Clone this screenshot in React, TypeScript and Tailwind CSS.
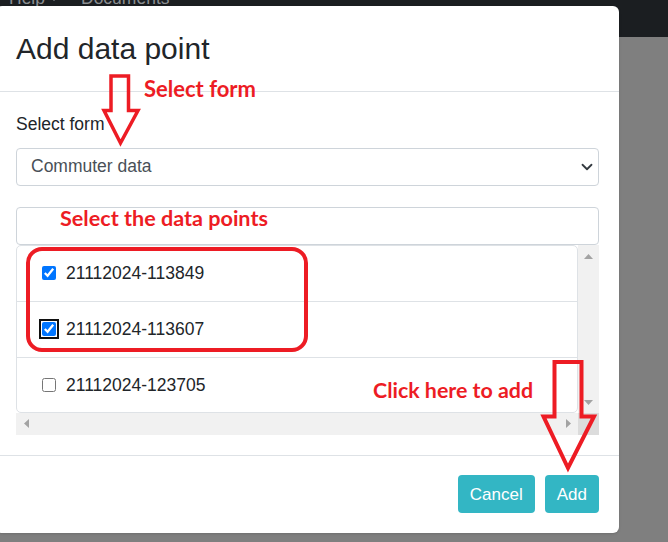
import React from 'react';

const points = [
    { id: '21112024-113849', checked: true, focused: false },
    { id: '21112024-113607', checked: true, focused: true },
    { id: '21112024-123705', checked: false, focused: false },
];

const Triangle: React.FC<{ dir: 'up' | 'down' | 'left' | 'right' }> = ({ dir }) => {
    const vertical = dir === 'up' || dir === 'down';
    const d = {
        up: '0,5 4.5,0 9,5',
        down: '0,0 9,0 4.5,5',
        left: '5,0 5,9 0,4.5',
        right: '0,0 5,4.5 0,9',
    }[dir];
    return (
        <svg width={vertical ? 9 : 5} height={vertical ? 5 : 9} viewBox={vertical ? '0 0 9 5' : '0 0 5 9'} className="block">
            <polygon points={d} fill="#a3a3a3" />
        </svg>
    );
};

// hollow red arrow used for the hand-drawn annotations
const HollowArrow: React.FC<{ pts: string; width: number }> = ({ pts, width }) => (
    <svg width="668" height="542" viewBox="0 0 668 542" className="absolute left-0 top-0 pointer-events-none">
        <polygon points={pts} fill="none" stroke="#ed1c24" strokeWidth={width} strokeLinejoin="miter" />
    </svg>
);

const App: React.FC = () => {
    return (
        <div className="relative w-[668px] h-[542px] overflow-hidden bg-[#7f7f7f] text-[#212529] font-['Liberation_Sans',Arial,sans-serif]">
            {/* navbar behind the backdrop */}
            <nav className="h-[37px] bg-[#1b1e21] flex items-start">
                <div className="flex items-center mt-[-10px] pl-[9px] text-[17.5px] leading-[17px] text-[#8b8e91]">
                    <span>Help</span>
                    <span className="ml-[4px] w-0 h-0 border-t-[5px] border-t-[#8b8e91] border-x-[5px] border-x-transparent" />
                    <span className="ml-[22px]">Documents</span>
                </div>
            </nav>

            {/* modal */}
            <div className="absolute left-[-4px] top-[6px] w-[623px] h-[527px] bg-white rounded-[6px] flex flex-col shadow-sm">
                <div className="h-[86px] flex-shrink-0 flex items-center px-[20px] border-b border-[#dee2e6]">
                    <h2 className="text-[30px] leading-[36px]">Add data point</h2>
                </div>

                <div className="flex flex-col px-[20px] py-[20px] text-[17.5px]">
                    <label className="leading-[25.5px] mb-[10px]">Select form</label>
                    <div className="relative h-[38px]">
                        <select defaultValue="commuter" className="appearance-none w-full h-full border border-[#ced4da] rounded-[4px] pl-[14px] text-[#495057] bg-white outline-none">
                            <option value="commuter">Commuter data</option>
                        </select>
                        <svg width="12" height="12" viewBox="0 0 16 16" className="absolute right-[6px] top-[13px] pointer-events-none">
                            <path d="m2 5 6 6 6-6" fill="none" stroke="#343a40" strokeWidth="2.4" strokeLinecap="round" strokeLinejoin="round" />
                        </svg>
                    </div>

                    <input className="mt-[21px] h-[38px] border border-[#ced4da] rounded-[4px] px-[14px] outline-none" />

                    <div className="flex h-[190px]">
                        <div className="flex-1 flex flex-col">
                            <div className="h-[168px] border border-[#dee2e6] rounded-[5px] flex flex-col">
                                {points.map((p, i) => (
                                    <div key={p.id} className={`flex items-center pl-[25px] ${i < points.length - 1 ? 'h-[56px] border-b border-[#dee2e6]' : 'flex-1'}`}>
                                        <input
                                            type="checkbox"
                                            defaultChecked={p.checked}
                                            className={`m-0 w-[14px] h-[14px] rounded-[2px] ${p.focused ? 'outline-2 outline-[#101010] outline-offset-[1px]' : ''}`}
                                        />
                                        <span className="ml-[10px] leading-[20px]">{p.id}</span>
                                    </div>
                                ))}
                            </div>
                            <div className="flex-1 bg-[#f1f1f1] flex items-center justify-between pl-[8px] pr-[7px]">
                                <Triangle dir="left" />
                                <Triangle dir="right" />
                            </div>
                        </div>
                        <div className="w-[21px] flex flex-col">
                            <div className="h-[168px] bg-[#f1f1f1] flex flex-col items-center justify-between pt-[9px] pb-[8px]">
                                <Triangle dir="up" />
                                <Triangle dir="down" />
                            </div>
                            <div className="flex-1 bg-[#dcdcdc]" />
                        </div>
                    </div>
                </div>

                <div className="flex-1 border-t border-[#dee2e6] flex items-center justify-end gap-[10px] px-[20px]">
                    <button className="h-[38px] px-[12px] rounded-[4px] bg-[#33b6c4] text-white text-[17px]">Cancel</button>
                    <button className="h-[38px] px-[12px] rounded-[4px] bg-[#33b6c4] text-white text-[17px]">Add</button>
                </div>
            </div>

            {/* annotations */}
            <HollowArrow pts="111,76 128.5,76 128.5,110.5 138,110.5 120.5,143 104,110.5 111,110.5" width={3.5} />
            <HollowArrow pts="554.5,362 581.5,362 581.5,416.5 594,416.5 568,468 543.5,416.5 554.5,416.5" width={4} />
            <div className="absolute left-[26px] top-[247px] w-[282px] h-[105px] border-[4px] border-[#ed1c24] rounded-[16px] pointer-events-none" />
            <span className="absolute left-[144px] top-[78px] text-[22px] leading-[22px] font-bold text-[#ed1c24] font-['Lato',sans-serif] whitespace-nowrap">Select form</span>
            <span className="absolute left-[60px] top-[207px] text-[21.6px] leading-[22px] font-bold text-[#ed1c24] font-['Lato',sans-serif] whitespace-nowrap">Select the data points</span>
            <span className="absolute left-[373px] top-[379px] text-[21.4px] leading-[22px] font-bold text-[#ed1c24] font-['Lato',sans-serif] whitespace-nowrap">Click here to add</span>
        </div>
    );
};

export default App;
